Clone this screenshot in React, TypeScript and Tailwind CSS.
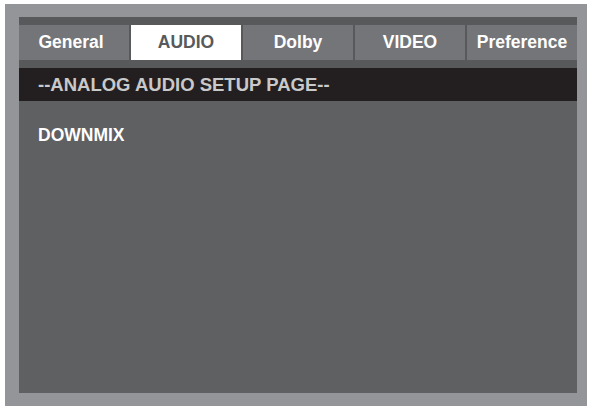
const tabs = ["General", "AUDIO", "Dolby", "VIDEO", "Preference"];

export default function App() {
  return (
    <div className="h-[406px] w-[590px] overflow-hidden bg-white pl-[5px] pt-[4px] font-['Liberation_Sans',Arial,sans-serif]">
      <div className="h-[402px] w-[582px] bg-[#939598] pl-[14px] pt-[13px]">
        <div className="flex h-[376px] w-[558px] flex-col bg-[#5f6062]">
          {/* top strip */}
          <div className="h-[8px] bg-[#58595b]" />

          {/* tabs */}
          <div className="grid h-[35px] grid-cols-5 gap-[2px] bg-[#58595b]">
            {tabs.map((t) => (
              <div
                key={t}
                className={
                  t === "AUDIO"
                    ? "flex items-center justify-center bg-white text-[17.5px] font-bold text-[#58595b]"
                    : t === "General"
                      ? "flex items-center justify-center bg-[#747578] pr-[6px] text-[17.5px] font-bold text-white"
                      : "flex items-center justify-center bg-[#747578] text-[17.5px] font-bold text-white"
                }
              >
                {t}
              </div>
            ))}
          </div>

          <div className="h-[8px] bg-[#58595b]" />

          {/* page header */}
          <div className="flex h-[33px] items-center bg-[#231f20] pl-[19px] text-[18.5px] font-bold text-[#c9c9ca]">
            --ANALOG AUDIO SETUP PAGE--
          </div>

          {/* content */}
          <div className="flex-1 pl-[19px] pt-[24px]">
            <div className="text-[17.5px] font-bold leading-[20px] text-white">DOWNMIX</div>
          </div>
        </div>
      </div>
    </div>
  );
}
